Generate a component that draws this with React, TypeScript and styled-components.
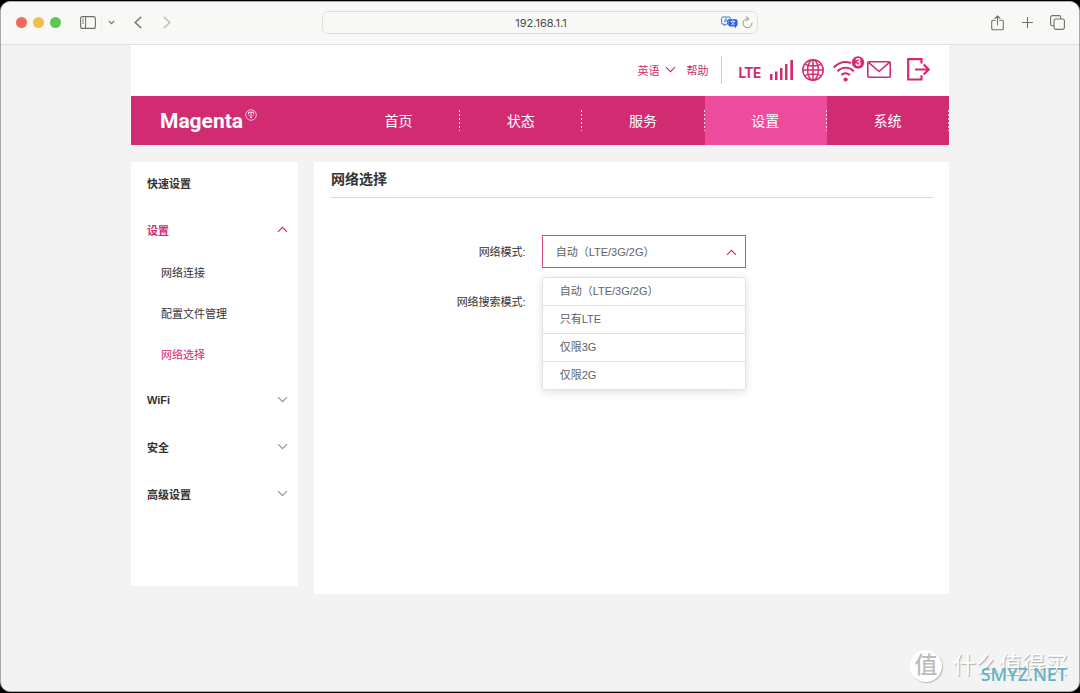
import React, { useState } from "react";
import styled, { createGlobalStyle } from "styled-components";

const magenta = "#d12b72";
const magentaLight = "#ed4c9d";
const sans = `"Liberation Sans", "Noto Sans CJK SC", sans-serif`;

const GlobalStyle = createGlobalStyle`
  *, *::before, *::after { box-sizing: border-box; }
  body { margin: 0; background: #000; color: #333; font-family: ${sans}; font-size: 11px; }
  button, input, select { font: inherit; color: inherit; margin: 0; }
  button { background: none; border: 0; padding: 0; cursor: pointer; }
  a { color: inherit; text-decoration: none; }
  ul { list-style: none; margin: 0; padding: 0; }
  svg { display: block; flex: none; }
`;

const BrowserWindow = styled.div`
  position: relative;
  display: flex;
  flex-direction: column;
  min-height: calc(100vh - 2px);
  margin: 1px 0;
  border: 1px solid #a9a9a9;
  border-radius: 10px;
  background: #f3f3f3;
  overflow: hidden;
`;

const Toolbar = styled.div`
  display: grid;
  grid-template-columns: 1fr minmax(0, 436px) 1fr;
  align-items: center;
  height: 43px;
  padding-bottom: 1px;
  background: #f8f8f6;
  border-bottom: 1px solid #dedede;
  color: #6f6f6d;
`;

const ToolGroup = styled.div<{ $end?: boolean }>`
  display: flex;
  align-items: center;
  justify-content: ${(p) => (p.$end ? "flex-end" : "flex-start")};
  padding: ${(p) => (p.$end ? "0 13px 0 0" : "0 0 0 15px")};
  gap: ${(p) => (p.$end ? "12px" : "0")};
`;

const Lights = styled.div`
  display: flex;
  gap: 6px;
  margin-right: 18px;
`;

const Light = styled.span<{ $color: string }>`
  width: 11px;
  height: 11px;
  border-radius: 50%;
  background: ${(p) => p.$color};
`;

const ToolButton = styled.button<{ $dim?: boolean }>`
  display: grid;
  place-items: center;
  min-width: 18px;
  height: 20px;
  color: ${(p) => (p.$dim ? "#b9b9b7" : "inherit")};
`;

const ToolSeparator = styled.span`
  width: 1px;
  height: 14px;
  margin: 0 0 0 4px;
  background: #eaeae8;
`;

const HistoryButtons = styled.div`
  display: flex;
  gap: 11px;
  margin-left: 9px;
`;

const AddressBar = styled.div`
  display: flex;
  align-items: center;
  gap: 4px;
  height: 23px;
  padding: 0 4px 0 42px;
  border: 1px solid #dfdfdd;
  border-radius: 6px;
`;

const AddressInput = styled.input`
  flex: 1;
  min-width: 0;
  padding: 0;
  border: 0;
  outline: 0;
  background: transparent;
  text-align: center;
  font-family: Inter, sans-serif;
  font-size: 11px;
  color: #4c4c4c;
`;

const BarIcon = styled.button`
  display: block;
`;

const Page = styled.div`
  width: 100%;
  max-width: 818px;
  margin: 0 auto;
`;

const StatusBar = styled.header`
  display: flex;
  align-items: center;
  justify-content: flex-end;
  gap: 9px;
  height: 51px;
  padding: 0 19px 2px 16px;
  background: #fff;
  color: ${magenta};
`;

const TextLinks = styled.div`
  display: flex;
  align-items: center;
  gap: 10px;
  height: 28px;
  padding-right: 13px;
  margin-right: 7px;
  border-right: 1px solid #ccc;
`;

const LanguageButton = styled.button`
  display: flex;
  align-items: center;
  gap: 6px;
`;

const Lte = styled.span`
  padding-top: 6px;
  font-family: Roboto, sans-serif;
  font-size: 14px;
  font-weight: 700;
`;

const StatusLink = styled.a`
  display: block;
`;

const LogoutButton = styled.button`
  margin-left: 7px;
`;

const NavBar = styled.nav`
  display: grid;
  grid-template-columns: 207px 1fr;
  height: 49px;
  background: ${magenta};
  color: #fff;
`;

const Brand = styled.a`
  display: flex;
  align-items: center;
  gap: 2px;
  padding-left: 29px;
  font-family: Roboto, sans-serif;
  font-size: 21px;
  font-weight: 700;
  line-height: 48px;

  svg { margin-bottom: 12px; }
`;

const Tabs = styled.ul`
  display: flex;
`;

const Tab = styled.li<{ $active?: boolean }>`
  display: flex;
  flex: 1;
  align-items: center;
  background: ${(p) => (p.$active ? magentaLight : "transparent")};

  a {
    flex: 1;
    text-align: center;
    font-size: 14px;
    line-height: 47px;
    padding-top: 2px;
  }

  &::after {
    content: "";
    width: 1px;
    height: 21px;
    background: repeating-linear-gradient(#ffd9ea 0 2px, transparent 2px 4px);
  }
`;

const Columns = styled.div`
  display: grid;
  grid-template-columns: 167px minmax(0, 1fr);
  align-items: start;
  gap: 16px;
  padding: 17px 0 24px;
`;

const Sidebar = styled.aside`
  min-height: 424px;
  background: #fff;
  font-weight: 700;
`;

const QuickLink = styled.a`
  display: block;
  padding: 0 16px;
  line-height: 44px;
`;

const GroupButton = styled.button<{ $open?: boolean }>`
  display: flex;
  align-items: center;
  justify-content: space-between;
  width: 100%;
  height: 47px;
  padding: 0 10px 0 16px;
  font-weight: 700;
  color: ${(p) => (p.$open ? magenta : "inherit")};
`;

const SubLink = styled.a<{ $active?: boolean }>`
  display: block;
  padding-left: 30px;
  font-weight: 400;
  line-height: 41px;
  color: ${(p) => (p.$active ? magenta : "inherit")};
`;

const Panel = styled.main`
  min-height: 432px;
  padding: 0 16px 0 17px;
  background: #fff;
`;

const PanelTitle = styled.h1`
  margin: 0;
  border-bottom: 1px solid #d9d9d9;
  font-size: 14px;
  font-weight: 700;
  line-height: 35px;
`;

const Form = styled.form`
  display: grid;
  gap: 17px;
  padding-top: 37px;
`;

const Field = styled.div`
  display: grid;
  grid-template-columns: 35% minmax(0, 204px);
  align-items: center;
  min-height: 33px;
`;

const FieldLabel = styled.label`
  padding: 0 16px 2px 0;
  text-align: right;
`;

const SelectBox = styled.div`
  position: relative;
  border: 1px solid #dc4a89;
  color: #606266;
`;

const Select = styled.select`
  display: block;
  width: 100%;
  height: 31px;
  padding: 0 30px 0 13px;
  border: 0;
  border-radius: 0;
  outline: 0;
  appearance: none;
  background: #fff;
`;

const SelectArrow = styled.span`
  position: absolute;
  top: 13px;
  right: 8px;
  color: ${magenta};
  pointer-events: none;
`;

const Options = styled.ul`
  position: absolute;
  top: 41px;
  left: -1px;
  right: -1px;
  z-index: 1;
  border: 1px solid #e2e3e6;
  border-radius: 3px;
  background: #fff;
  box-shadow: 0 2px 9px rgba(0, 0, 0, 0.13);
`;

const Option = styled.li`
  height: 28px;
  padding: 0 17px;
  border-bottom: 1px solid #e0e0e2;
  line-height: 27px;
  cursor: pointer;

  &:last-child { height: 27px; border-bottom: 0; }
`;

const Watermark = styled.div`
  position: absolute;
  right: 11px;
  bottom: 9px;
  display: flex;
  align-items: center;
  gap: 11px;
  color: #fff;
  font-size: 23px;
  line-height: 33px;
  text-shadow: 1px 1px 1px #aaa;
  pointer-events: none;
`;

const Seal = styled.span`
  width: 32px;
  height: 32px;
  border-radius: 50%;
  background: #fff;
  box-shadow: 1px 1px 1px #bbb;
  color: #bcbcbc;
  font-size: 23px;
  font-weight: 500;
  line-height: 31px;
  text-align: center;
  text-shadow: none;
`;

const SiteMark = styled.span`
  position: absolute;
  right: 1px;
  bottom: -4px;
  color: #62b2c6;
  font-family: "Noto Sans", sans-serif;
  font-size: 18px;
  font-weight: 500;
  line-height: 24px;
  text-shadow: none;
`;

function Chevron({ up, color = "currentColor" }: { up?: boolean; color?: string }) {
  return (
    <svg width="11" height="7" viewBox="0 0 11 7" fill="none" stroke={color} strokeWidth="1.2">
      <path d={up ? "M1 5.8 5.5 1.3 10 5.8" : "M1 1.2 5.5 5.7 10 1.2"} />
    </svg>
  );
}

function SidebarIcon() {
  return (
    <svg width="16" height="13" viewBox="0 0 16 13" fill="none" stroke="currentColor">
      <rect x="0.6" y="0.6" width="14.8" height="11.8" rx="2" strokeWidth="1.1" />
      <path d="M5.6 1v11" strokeWidth="1" />
      <path d="M2 3.2h2M2 5.2h2M2 7.2h2" strokeWidth="0.8" />
    </svg>
  );
}

function TranslateIcon() {
  return (
    <svg width="17" height="13" viewBox="0 0 17 13">
      <path d="M2 1h6a1.4 1.4 0 0 1 1.4 1.4V3.5H8A1.6 1.6 0 0 0 6.5 5v3.2H4.8L3.2 10V8.2H2A1.4 1.4 0 0 1 .6 6.8V2.4A1.4 1.4 0 0 1 2 1Z" fill="none" stroke="#3f73e8" strokeWidth="1" />
      <path d="m3 6.5 1.8-4 1.2 2.6M3.6 5.2h2" fill="none" stroke="#3f73e8" strokeWidth=".8" />
      <path d="M8.8 3.2H15a1.5 1.5 0 0 1 1.5 1.5V9A1.5 1.5 0 0 1 15 10.4v1.9l-1.8-1.9H8.8A1.5 1.5 0 0 1 7.3 9V4.7a1.5 1.5 0 0 1 1.5-1.5Z" fill="#2763e4" />
      <path d="M9.6 5.4h4.6M11.9 4.4v1M10.2 8.9c1.9-.8 2.9-2 3.2-3.4M13.7 8.9c-1.8-.7-2.9-1.9-3.3-3.4" fill="none" stroke="#fff" strokeWidth=".8" />
    </svg>
  );
}

function ReloadIcon() {
  return (
    <svg width="11" height="13" viewBox="0 0 11 13" fill="none" stroke="#8e8e8c" strokeWidth="1" strokeLinecap="round" strokeLinejoin="round">
      <path d="M6.2 2.8A4.5 4.5 0 1 0 10 7.2M4.4.8l2.3 2-2.1 2.1" />
    </svg>
  );
}

function ShareIcon() {
  return (
    <svg width="13" height="16" viewBox="0 0 13 16" fill="none" stroke="currentColor" strokeWidth="1.1" strokeLinecap="round" strokeLinejoin="round">
      <path d="M4.2 5.2H2A1.3 1.3 0 0 0 .7 6.5v7A1.3 1.3 0 0 0 2 14.8h9a1.3 1.3 0 0 0 1.3-1.3v-7A1.3 1.3 0 0 0 11 5.2H8.8M6.5 9.8V1M4 3.3 6.5.8 9 3.3" />
    </svg>
  );
}

function PlusIcon() {
  return (
    <svg width="11" height="11" viewBox="0 0 11 11" stroke="currentColor" strokeWidth="1.1" strokeLinecap="round">
      <path d="M5.5.5v10M.5 5.500h10" />
    </svg>
  );
}

function TabsIcon() {
  return (
    <svg width="15" height="15" viewBox="0 0 15 15" fill="none" stroke="currentColor" strokeWidth="1.1">
      <rect x="4" y="4" width="10.4" height="10.4" rx="1.8" />
      <path d="M4 10.8H2.4A1.8 1.8 0 0 1 .6 9V2.4A1.8 1.8 0 0 1 2.4.6H9a1.8 1.8 0 0 1 1.8 1.8V4" />
    </svg>
  );
}

function SignalIcon() {
  return (
    <svg width="23" height="20" viewBox="0 0 23 20" fill={magenta}>
      <path d="M0 14h2.500v6H0zM5 11.500h2.500V20H5zM10 8h2.500v12H10zM15 4h2.500v16H15zM20.300 0H23v20h-2.700z" />
    </svg>
  );
}

function GlobeIcon() {
  return (
    <svg width="22" height="22" viewBox="0 0 22 22" fill="none" stroke={magenta} strokeWidth="1.5">
      <circle cx="11" cy="11" r="10.2" />
      <ellipse cx="11" cy="11" rx="5.4" ry="10.2" />
      <path d="M11 .8v20.400M.8 11h20.400M2.600 5.400c4.900 1.800 11.900 1.800 16.800 0M2.600 16.600c4.900-1.800 11.900-1.800 16.800 0" />
    </svg>
  );
}

function WifiIcon() {
  return (
    <svg width="25" height="30" viewBox="0 0 25 30" overflow="visible" fill="none">
      <g stroke={magenta} strokeWidth="2">
        <path d="M.8 12.500C6.500 6.600 12.500 6.200 18 8" />
        <path d="M4.500 16.200c5-4.500 11.300-4.500 16.300 0" />
        <path d="M8.300 20c2.800-2.300 5.900-2.300 8.700 0" />
      </g>
      <circle cx="12.6" cy="24.5" r="2.1" fill={magenta} />
      <circle cx="25" cy="7.500" r="6.200" fill={magenta} />
      <text x="25" y="11" textAnchor="middle" fill="#fff" fontFamily="Roboto, sans-serif" fontSize="10" fontWeight="700">3</text>
    </svg>
  );
}

function MailIcon() {
  return (
    <svg width="24" height="17" viewBox="0 0 24 17" fill="none" stroke={magenta} strokeWidth="1.6" strokeLinejoin="round">
      <rect x=".8" y=".8" width="22.400" height="15.400" rx="1" />
      <path d="m1.200 1.200 10.800 9.300L22.800 1.200" />
    </svg>
  );
}

function LogoutIcon() {
  return (
    <svg width="23" height="23" viewBox="0 0 23 23" fill="none" stroke={magenta} strokeWidth="2.2">
      <path d="M14.500 5.500V1.200H1.200v20.300h13.300v-4.300" />
      <path d="M8 11.500h13.500M16.700 6.500l5 5-5 5" />
    </svg>
  );
}

function BrandBadge() {
  return (
    <svg width="12" height="12" viewBox="0 0 12 12" fill="none" stroke="#fff" strokeWidth=".7">
      <circle cx="6" cy="6" r="5.3" />
      <path d="M3.500 5.200V3.200h5v2M6 3.200v5.300M5 8.700h2M3.600 6.600h.9M7.500 6.600h.9" strokeWidth=".9" />
    </svg>
  );
}

const tabs = ["首页", "状态", "服务", "设置", "系统"];
const subLinks = ["网络连接", "配置文件管理", "网络选择"];
const modes = ["自动（LTE/3G/2G）", "只有LTE", "仅限3G", "仅限2G"];

export default function App() {
  const [mode, setMode] = useState(modes[0]);
  const [open, setOpen] = useState(true);
  const [settingsOpen, setSettingsOpen] = useState(true);

  return (
    <BrowserWindow>
      <GlobalStyle />
      <Toolbar>
        <ToolGroup>
          <Lights>
            <Light $color="#ed6a5e" />
            <Light $color="#f4bd50" />
            <Light $color="#61c455" />
          </Lights>
          <ToolButton aria-label="Sidebar"><SidebarIcon /></ToolButton>
          <ToolSeparator />
          <ToolButton aria-label="Tab groups">
            <svg width="7" height="5" viewBox="0 0 7 5" fill="none" stroke="currentColor" strokeWidth="1.2"><path d="m.8.9 2.700 2.700L6.200.9" /></svg>
          </ToolButton>
          <HistoryButtons>
            <ToolButton aria-label="Back">
              <svg width="8" height="13" viewBox="0 0 8 13" fill="none" stroke="currentColor" strokeWidth="1.4" strokeLinecap="round"><path d="M6.800 1.200 1.200 6.500l5.600 5.300" /></svg>
            </ToolButton>
            <ToolButton aria-label="Forward" $dim>
              <svg width="8" height="13" viewBox="0 0 8 13" fill="none" stroke="currentColor" strokeWidth="1.4" strokeLinecap="round"><path d="m1.200 1.200 5.600 5.300-5.600 5.300" /></svg>
            </ToolButton>
          </HistoryButtons>
        </ToolGroup>
        <AddressBar>
          <AddressInput aria-label="Address" defaultValue="192.168.1.1" />
          <BarIcon aria-label="Translate"><TranslateIcon /></BarIcon>
          <BarIcon aria-label="Reload"><ReloadIcon /></BarIcon>
        </AddressBar>
        <ToolGroup $end>
          <ToolButton aria-label="Share"><ShareIcon /></ToolButton>
          <ToolButton aria-label="New tab"><PlusIcon /></ToolButton>
          <ToolButton aria-label="All tabs"><TabsIcon /></ToolButton>
        </ToolGroup>
      </Toolbar>

      <Page>
        <StatusBar>
          <TextLinks>
            <LanguageButton>英语<Chevron /></LanguageButton>
            <a href="#help">帮助</a>
          </TextLinks>
          <Lte>LTE</Lte>
          <SignalIcon />
          <StatusLink href="#network" aria-label="Network"><GlobeIcon /></StatusLink>
          <StatusLink href="#wifi" aria-label="WiFi"><WifiIcon /></StatusLink>
          <StatusLink href="#messages" aria-label="Messages"><MailIcon /></StatusLink>
          <LogoutButton aria-label="Log out"><LogoutIcon /></LogoutButton>
        </StatusBar>

        <NavBar>
          <Brand href="#home">Magenta<BrandBadge /></Brand>
          <Tabs>
            {tabs.map((name) => (
              <Tab key={name} $active={name === "设置"}><a href={`#${name}`}>{name}</a></Tab>
            ))}
          </Tabs>
        </NavBar>

        <Columns>
          <Sidebar>
            <QuickLink href="#quick">快速设置</QuickLink>
            <GroupButton $open={settingsOpen} aria-expanded={settingsOpen} onClick={() => setSettingsOpen(!settingsOpen)}>
              设置<Chevron up={settingsOpen} />
            </GroupButton>
            {settingsOpen && (
              <ul>
                {subLinks.map((name) => (
                  <li key={name}><SubLink href={`#${name}`} $active={name === "网络选择"}>{name}</SubLink></li>
                ))}
              </ul>
            )}
            {["WiFi", "安全", "高级设置"].map((name) => (
              <GroupButton key={name} aria-expanded={false}>{name}<Chevron color="#909399" /></GroupButton>
            ))}
          </Sidebar>

          <Panel>
            <PanelTitle>网络选择</PanelTitle>
            <Form>
              <Field>
                <FieldLabel htmlFor="mode">网络模式:</FieldLabel>
                <SelectBox>
                  <Select
                    id="mode"
                    value={mode}
                    onChange={(e) => setMode(e.target.value)}
                    onMouseDown={(e) => { e.preventDefault(); setOpen(!open); }}
                  >
                    {modes.map((m) => <option key={m}>{m}</option>)}
                  </Select>
                  <SelectArrow><Chevron up={open} /></SelectArrow>
                  {open && (
                    <Options role="listbox" aria-label="网络模式">
                      {modes.map((m) => (
                        <Option key={m} role="option" aria-selected={m === mode} onClick={() => { setMode(m); setOpen(false); }}>{m}</Option>
                      ))}
                    </Options>
                  )}
                </SelectBox>
              </Field>
              <Field>
                <FieldLabel as="span">网络搜索模式:</FieldLabel>
              </Field>
            </Form>
          </Panel>
        </Columns>
      </Page>

      <Watermark>
        <Seal>值</Seal>
        <span>什么值得买</span>
        <SiteMark>SMYZ.NET</SiteMark>
      </Watermark>
    </BrowserWindow>
  );
}
